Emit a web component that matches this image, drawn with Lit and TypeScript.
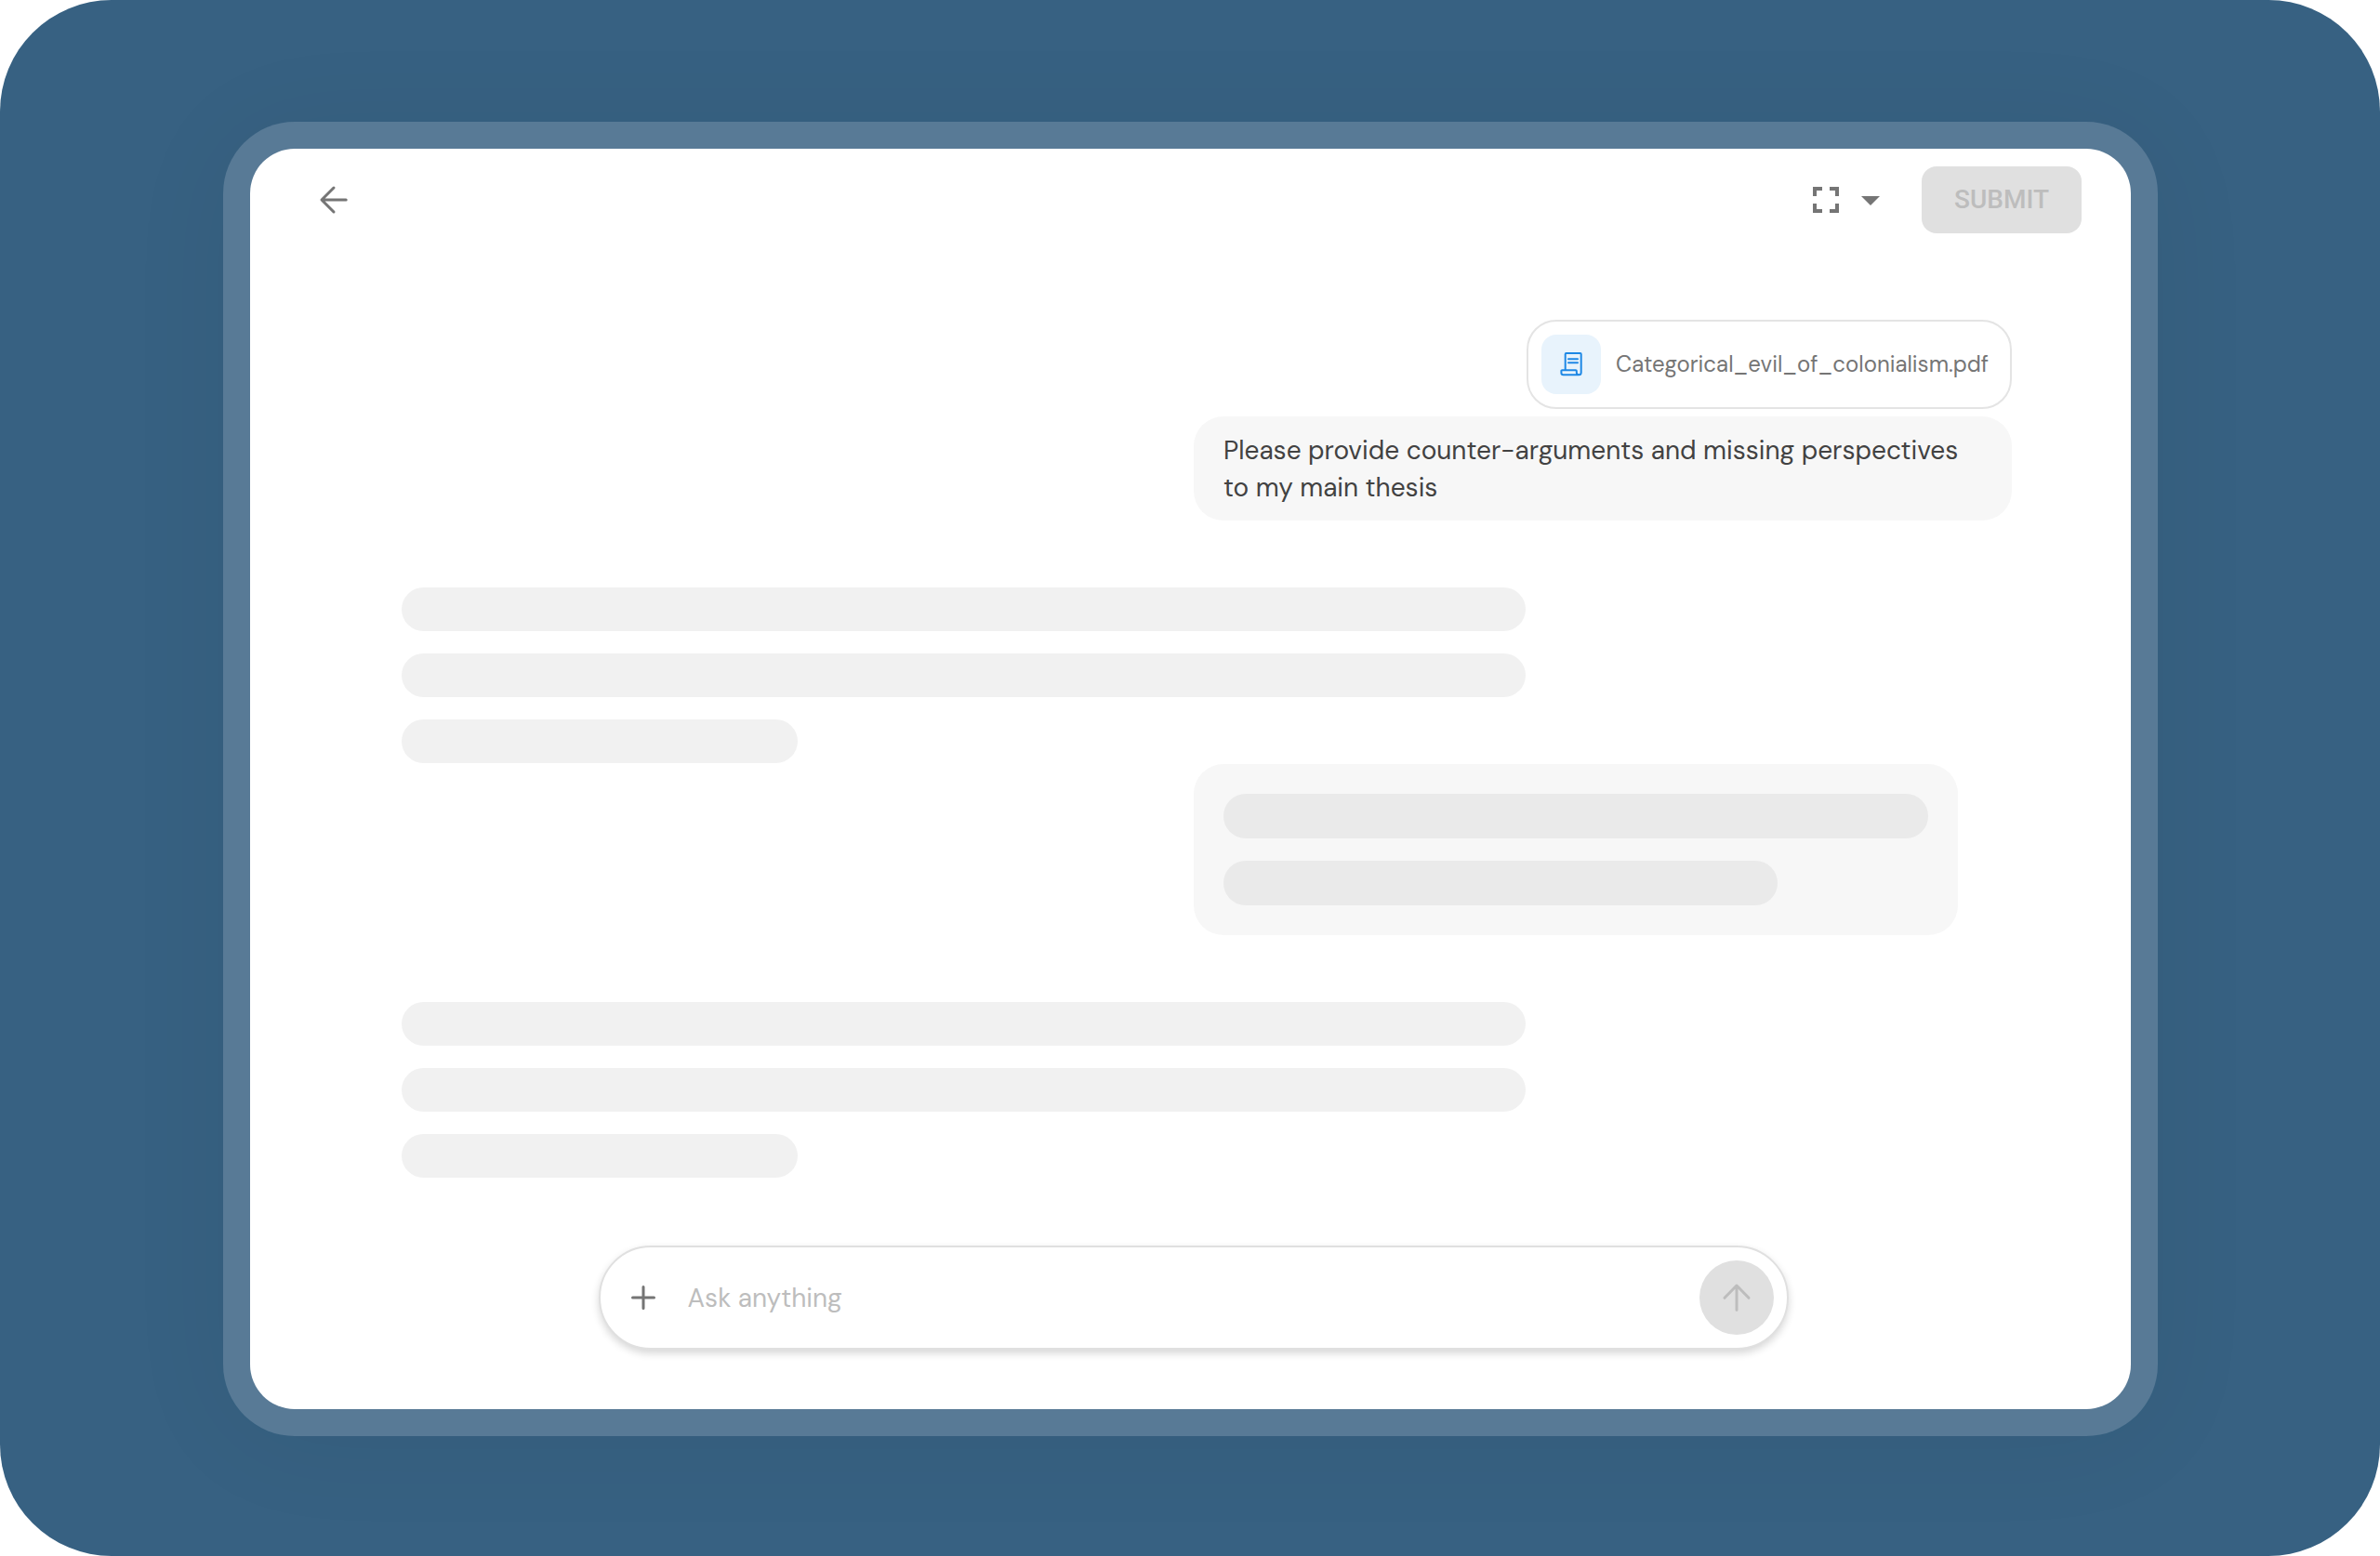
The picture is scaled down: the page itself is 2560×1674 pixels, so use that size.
import { LitElement, html, css, svg } from "lit";
import { customElement, property, state } from "lit/decorators.js";

const backIcon = svg`<path d="M37.2 24H11.5M24 11 11 24l13 13" />`;
const sendIcon = svg`<path d="M24 37.2V11.5M11 24.3 24 11l13 13.3" />`;
const plusIcon = svg`<path d="M24 12.5v23M12.5 24h23" />`;

@customElement("skeleton-lines")
export class SkeletonLines extends LitElement {
  @property({ attribute: false }) widths: number[] = [];

  static styles = css`
    :host {
      display: flex;
      flex-direction: column;
      gap: 24px;
    }
    .line {
      height: var(--line-height, 47px);
      border-radius: 24px;
      background: var(--line-color, #f1f1f1);
    }
  `;

  render() {
    return this.widths.map(
      (width) => html`<div class="line" style="width:${width}%"></div>`
    );
  }
}

@customElement("app-root")
export class AppRoot extends LitElement {
  @state() private draft = "";

  static styles = css`
    :host {
      display: block;
      background: #ffffff;
      font-family: "DM Sans", Inter, "Open Sans", sans-serif;
      font-size: 28px;
      line-height: 40px;
      color: #424242;
    }
    * {
      box-sizing: border-box;
    }
    button {
      display: flex;
      align-items: center;
      justify-content: center;
      padding: 0;
      border: 0;
      background: none;
      color: #757575;
      font: inherit;
    }
    .page {
      display: flex;
      min-height: 100vh;
      padding: 131px 239px 129px 240px;
      border-radius: 120px;
      background: #376182;
    }
    .frame {
      display: flex;
      flex: 1;
      min-width: 0;
      padding: 29px;
      border-radius: 77px;
      background: #587a96;
      box-shadow: 0 8px 120px rgba(0, 0, 0, 0.05);
    }
    .panel {
      display: flex;
      flex: 1;
      flex-direction: column;
      min-width: 0;
      border-radius: 48px;
      background: #ffffff;
    }
    .bar {
      display: flex;
      align-items: center;
      padding: 19px 53px 0 66px;
    }
    .actions {
      display: flex;
      align-items: center;
      margin-left: auto;
    }
    .icon {
      width: 48px;
      height: 48px;
      fill: currentColor;
    }
    .stroked {
      fill: none;
      stroke: currentColor;
      stroke-width: 3;
      stroke-linecap: round;
      stroke-linejoin: round;
    }
    .submit {
      height: 72px;
      margin-left: 31px;
      padding: 0 35px;
      border-radius: 16px;
      background: #e0e0e0;
      color: #bdbdbd;
      font-family: Roboto, sans-serif;
      font-weight: 500;
    }
    .thread {
      display: flex;
      flex: 1;
      flex-direction: column;
      padding: 93px 128px 72px 163px;
    }
    .mine {
      display: flex;
      flex-direction: column;
      align-items: flex-end;
      align-self: flex-end;
      gap: 8px;
      width: 880px;
      max-width: 100%;
    }
    .file {
      display: flex;
      align-items: center;
      gap: 16px;
      padding: 14px 23px 14px 14px;
      border: 2px solid #e4e4e4;
      border-radius: 32px;
      color: #757575;
      font-size: 24px;
      line-height: 32px;
      text-decoration: none;
    }
    .thumb {
      display: flex;
      align-items: center;
      justify-content: center;
      width: 64px;
      height: 64px;
      border-radius: 16px;
      background: #e8f3fc;
      color: #1e88e5;
    }
    .scroll {
      width: 32px;
      height: 32px;
      fill: none;
      stroke: currentColor;
      stroke-width: 2;
      stroke-linecap: round;
      stroke-linejoin: round;
    }
    .bubble {
      width: 100%;
      margin: 0;
      padding: 17px 32px 15px;
      border-radius: 32px;
      background: #f7f7f7;
    }
    .reply {
      margin-top: 72px;
    }
    .pending {
      margin-top: 1px;
      padding-right: 58px;
    }
    .pending .bubble {
      padding: 32px;
      --line-height: 48px;
      --line-color: #eaeaea;
    }
    .composer {
      display: flex;
      align-items: center;
      align-self: center;
      gap: 24px;
      width: 1280px;
      max-width: 90%;
      margin: 0 0 64px 6px;
      padding: 14px 14px 14px 22px;
      border: 2px solid #e0e0e0;
      border-radius: 56px;
      background: #ffffff;
      box-shadow: 0 4px 8px rgba(0, 0, 0, 0.16);
    }
    .ask {
      flex: 1;
      min-width: 0;
      padding: 2px 0 0;
      border: 0;
      outline: 0;
      background: none;
      color: #424242;
      font: inherit;
    }
    .ask::placeholder {
      color: #bdbdbd;
      opacity: 1;
    }
    .send {
      width: 80px;
      height: 80px;
      border-radius: 50%;
      background: #e0e0e0;
      color: #bdbdbd;
    }
  `;

  private onInput(event: Event) {
    this.draft = (event.target as HTMLInputElement).value;
  }

  private strokedIcon(shape: unknown) {
    return html`<svg class="icon stroked" viewBox="0 0 48 48" aria-hidden="true">
      ${shape}
    </svg>`;
  }

  render() {
    return html`
      <div class="page">
        <div class="frame">
          <main class="panel">
            <header class="bar">
              <button type="button" aria-label="Back">
                ${this.strokedIcon(backIcon)}
              </button>
              <div class="actions">
                <button type="button" aria-label="Full screen">
                  <svg class="icon" viewBox="0 0 24 24" aria-hidden="true">
                    <path
                      d="M7 14H5v5h5v-2H7v-3zM5 10h2V7h3V5H5v5zm12 7h-3v2h5v-5h-2v3zM14 5v2h3v3h2V5h-5z"
                    />
                  </svg>
                </button>
                <button type="button" aria-label="View options">
                  <svg class="icon" viewBox="0 0 24 24" aria-hidden="true">
                    <path d="m7 10 5 5 5-5z" />
                  </svg>
                </button>
                <button class="submit" type="button" disabled>SUBMIT</button>
              </div>
            </header>

            <section class="thread" aria-label="Conversation">
              <div class="mine">
                <a class="file" href="#">
                  <span class="thumb">
                    <svg class="scroll" viewBox="0 0 32 32" aria-hidden="true">
                      <path
                        d="M9.7 22V5a1 1 0 0 1 1-1h15a1 1 0 0 1 1 1v19.8a2.5 2.5 0 0 1-2.5 2.5H7.6a2.2 2.2 0 0 1-2.2-2.2v-2a.9.9 0 0 1 .9-.9h14.6a.9.9 0 0 1 .9.9v1.7a2.4 2.4 0 0 0 2.4 2.4M13 10.3h10M13 14.3h10"
                      />
                    </svg>
                  </span>
                  Categorical_evil_of_colonialism.pdf
                </a>
                <p class="bubble">
                  Please provide counter-arguments and missing perspectives to
                  my main thesis
                </p>
              </div>

              <skeleton-lines class="reply" .widths=${[69.8, 69.8, 24.6]}></skeleton-lines>

              <div class="mine pending">
                <div class="bubble">
                  <skeleton-lines .widths=${[100, 78.6]}></skeleton-lines>
                </div>
              </div>

              <skeleton-lines class="reply" .widths=${[69.8, 69.8, 24.6]}></skeleton-lines>
            </section>

            <form class="composer" @submit=${(e: Event) => e.preventDefault()}>
              <button type="button" aria-label="Add attachment">
                ${this.strokedIcon(plusIcon)}
              </button>
              <input
                class="ask"
                type="text"
                aria-label="Ask anything"
                placeholder="Ask anything"
                .value=${this.draft}
                @input=${this.onInput}
              />
              <button
                class="send"
                type="submit"
                aria-label="Send"
                ?disabled=${this.draft.trim() === ""}
              >
                ${this.strokedIcon(sendIcon)}
              </button>
            </form>
          </main>
        </div>
      </div>
    `;
  }
}
